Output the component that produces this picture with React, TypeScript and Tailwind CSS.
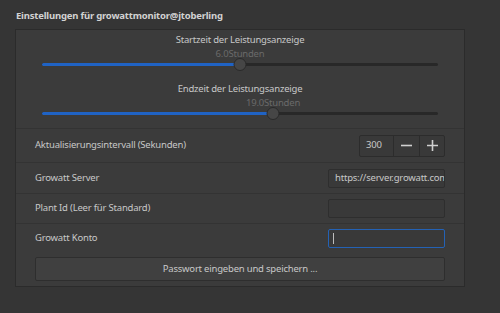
import React from "react";

function Slider({ label, value, min, max }: { label: string; value: number; min: number; max: number }) {
  const pct = ((value - min) / (max - min)) * 100;
  return (
    <div className="h-[49px] pt-[3px] flex flex-col">
      <div className="h-[14px] leading-[14px] text-center text-[#c8c8c8]">{label}</div>
      <div className="relative h-[14px] mx-[26px]">
        <div
          className="absolute top-0 -translate-x-1/2 leading-[14px] text-[#6a6a6a] whitespace-nowrap"
          style={{ left: `${pct}%` }}
        >
          {value.toFixed(1)}Stunden
        </div>
      </div>
      <div className="relative h-[12px] mx-[26px] -mt-[3px]">
        <div className="absolute left-0 right-0 top-[5px] h-[3px] rounded-full bg-[#282828]" />
        <div className="absolute left-0 top-[5px] h-[3px] rounded-full bg-[#2063c4]" style={{ width: `${pct}%` }} />
        <div
          className="absolute top-0 w-[13px] h-[13px] -translate-x-1/2 rounded-full bg-[#464646] border border-[#2a2a2a]"
          style={{ left: `${pct}%` }}
        />
      </div>
    </div>
  );
}

export default function App() {
  return (
    <div
      className="w-[500px] h-[313px] bg-[#353535] text-[9.5px] tracking-[-0.2px] overflow-hidden"
      style={{ fontFamily: '"Noto Sans", "Open Sans", sans-serif' }}
    >
      <div className="h-[29px] pl-[16px] pt-[9px] leading-[14px] font-bold text-[#d2d2d2]">
        Einstellungen für growattmonitor@jtoberling
      </div>
      <div className="ml-[15px] w-[450px] h-[258px] border border-[#2b2b2b] bg-[#3b3b3b] flex flex-col">
        <Slider label="Startzeit der Leistungsanzeige" value={6} min={0} max={12} />
        <Slider label="Endzeit der Leistungsanzeige" value={19} min={12} max={24} />
        <div className="h-[34px] border-t border-[#333333] flex items-center justify-between pl-[19px] pr-[19px]">
          <span className="text-[#c8c8c8]">Aktualisierungsintervall (Sekunden)</span>
          <div className="flex h-[22px] border border-[#2c2c2c] bg-[#393939] rounded-[2px]">
            <div className="w-[33px] pl-[6px] flex items-center text-[#c8c8c8]">300</div>
            <div className="w-[26px] border-l border-[#2c2c2c] flex items-center justify-center">
              <svg width="11" height="11" viewBox="0 0 11 11">
                <path d="M0 5.5H11" stroke="#d0d0d0" strokeWidth="1.6" />
              </svg>
            </div>
            <div className="w-[25px] border-l border-[#2c2c2c] flex items-center justify-center">
              <svg width="11" height="11" viewBox="0 0 11 11">
                <path d="M0 5.5H11M5.5 0V11" stroke="#d0d0d0" strokeWidth="1.6" />
              </svg>
            </div>
          </div>
        </div>
        <div className="h-[31px] border-t border-[#333333] flex items-center justify-between pl-[19px] pr-[19px]">
          <span className="text-[#c8c8c8]">Growatt Server</span>
          <div className="w-[117px] h-[19px] border border-[#2e2e2e] bg-[#393939] rounded-[2px] pl-[6px] flex items-center overflow-hidden whitespace-nowrap text-[#c8c8c8]">
            https://server.growatt.com
          </div>
        </div>
        <div className="h-[30px] border-t border-[#333333] flex items-center justify-between pl-[19px] pr-[19px]">
          <span className="text-[#c8c8c8]">Plant Id (Leer für Standard)</span>
          <div className="w-[117px] h-[19px] border border-[#2e2e2e] bg-[#393939] rounded-[2px]" />
        </div>
        <div className="h-[30px] border-t border-[#333333] flex items-center justify-between pl-[19px] pr-[19px]">
          <span className="text-[#c8c8c8]">Growatt Konto</span>
          <div className="w-[117px] h-[19px] border border-[#2462b5] bg-[#393939] rounded-[2px] pl-[4px] flex items-center">
            <div className="w-[1px] h-[11px] bg-[#bdbdbd]" />
          </div>
        </div>
        <div className="pl-[19px] pr-[19px] pt-[4px]">
          <div className="h-[24px] border border-[#2e2e2e] bg-[#404040] rounded-[2px] flex items-center justify-center text-[#c8c8c8]">
            Passwort eingeben und speichern ...
          </div>
        </div>
      </div>
    </div>
  );
}
